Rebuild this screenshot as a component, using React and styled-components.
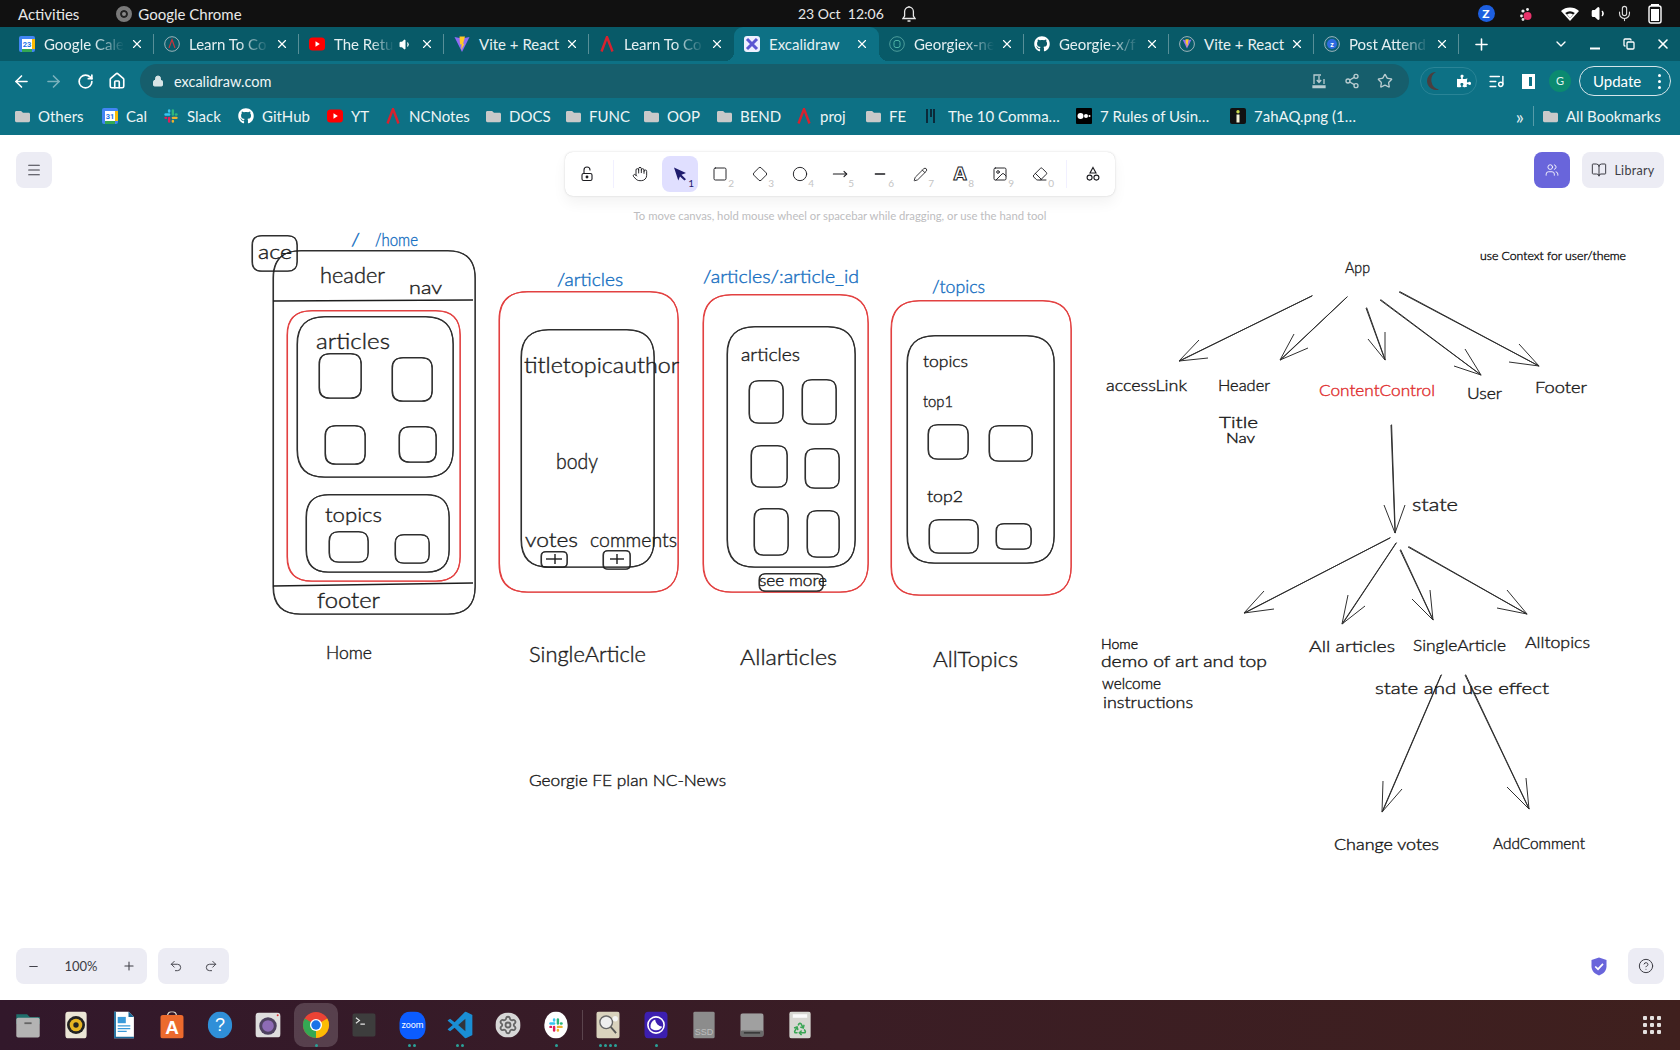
import React from 'react';
import styled, { createGlobalStyle, css } from 'styled-components';
import {
  ArrowLeft, ArrowRight, RotateCw, House, Lock, Share2, Star, Minus, Plus, Undo2, Redo2,
  Hand, Square, Diamond, Circle, Pencil, Image, Eraser, Users, BookOpen, CircleHelp,
  ChevronDown, X, Mic, Volume1, Settings, Recycle, Menu, MoveRight, ListMusic, Copy,
} from 'lucide-react';
import { FaGithub, FaFolder, FaPuzzlePiece } from 'react-icons/fa';

const GlobalStyle = createGlobalStyle`
  html, body { margin: 0; padding: 0; overflow: hidden; background: #fff; }
  body { font-family: "Lato", "Noto Sans", sans-serif; }
`;

const Page = styled.div`
  width: 1680px;
  height: 1050px;
  display: flex;
  flex-direction: column;
`;

/* ---------- gnome top bar ---------- */

const TopBar = styled.div`
  height: 27px;
  background: #111111;
  color: #e8e8e8;
  display: flex;
  align-items: center;
  font-size: 15px;
  padding-left: 18px;
`;

const TopLeft = styled.div`
  width: 780px;
  display: flex;
  align-items: center;
`;

const AppName = styled.div`
  margin-left: 37px;
  display: flex;
  align-items: center;
  gap: 6px;
`;

const ChromeDot = styled.span`
  width: 16px;
  height: 16px;
  border-radius: 50%;
  background: #8a8a8a;
  border: 4px solid #7a7a7a;
  box-sizing: border-box;
  box-shadow: inset 0 0 0 2px #222;
`;

const Clock = styled.div`
  display: flex;
  align-items: center;
  gap: 18px;
  white-space: nowrap;
  font-size: 14px;
`;

const Tray = styled.div`
  margin-left: auto;
  display: flex;
  align-items: center;
`;

const TraySlot = styled.span`
  width: ${(p) => p.$w}px;
  display: flex;
  justify-content: center;
  align-items: center;
`;

const ZoomBadge = styled.span`
  width: 17px;
  height: 17px;
  border-radius: 50%;
  background: #1d5fe0;
  color: #fff;
  font-size: 12px;
  font-weight: 900;
  line-height: 17px;
  text-align: center;
`;

/* ---------- chrome tabs ---------- */

const TabBar = styled.div`
  height: 34px;
  background: #085a68;
  display: flex;
  align-items: center;
  padding-left: 9px;
  color: #e6f0f2;
  font-size: 15px;
`;

const TAB_ACTIVE = '#0d7185';

const activeTab = css`
  background: ${TAB_ACTIVE};
  border-radius: 9px 9px 0 0;
  &::before, &::after {
    content: '';
    position: absolute;
    bottom: 0;
    width: 9px;
    height: 9px;
  }
  &::before {
    left: -9px;
    background: radial-gradient(circle at 0 0, transparent 9px, ${TAB_ACTIVE} 9px);
  }
  &::after {
    right: -9px;
    background: radial-gradient(circle at 100% 0, transparent 9px, ${TAB_ACTIVE} 9px);
  }
`;

const separator = css`
  &::after {
    content: '';
    position: absolute;
    right: 0;
    top: 7px;
    width: 1px;
    height: 20px;
    background: rgba(255, 255, 255, 0.32);
  }
`;

const Tab = styled.div`
  position: relative;
  width: 145px;
  height: 34px;
  box-sizing: border-box;
  padding-left: 10px;
  display: flex;
  align-items: center;
  flex-shrink: 0;
  ${(p) => p.$active && activeTab}
  ${(p) => p.$sep && separator}
`;

const Favicon = styled.span`
  width: 16px;
  height: 16px;
  display: flex;
  flex-shrink: 0;
`;

const TabTitle = styled.span`
  margin-left: 9px;
  width: ${(p) => p.$w || 80}px;
  white-space: nowrap;
  ${(p) => p.$fade && css`
    mask-image: linear-gradient(to right, #000 62%, transparent 100%);
  `}
`;

const TabClose = styled.span`
  display: flex;
  margin-left: auto;
  margin-right: 10px;
`;

const NewTab = styled.span`
  width: 44px;
  display: flex;
  justify-content: center;
`;

const WindowControls = styled.div`
  margin-left: auto;
  display: flex;
`;

const WindowButton = styled.span`
  width: 34px;
  display: flex;
  justify-content: center;
  align-items: center;
`;

/* ---------- chrome toolbar ---------- */

const Toolbar = styled.div`
  height: 40px;
  box-sizing: border-box;
  background: ${TAB_ACTIVE};
  display: flex;
  align-items: center;
  padding: 0 9px 0 5px;
  color: #fff;
`;

const NavButton = styled.span`
  width: 32px;
  display: flex;
  justify-content: center;
  opacity: ${(p) => (p.$dim ? 0.45 : 1)};
`;

const UrlBar = styled.div`
  flex: 1;
  height: 34px;
  margin: 0 11px 0 7px;
  border-radius: 17px;
  background: #165e6c;
  display: flex;
  align-items: center;
  padding: 0 8px 0 12px;
  font-size: 14.5px;
  color: #eef5f6;
`;

const UrlText = styled.span`
  margin-left: 10px;
`;

const UrlIcons = styled.div`
  margin-left: auto;
  display: flex;
  color: #b9ccd0;
`;

const UrlIcon = styled.span`
  width: 33px;
  display: flex;
  justify-content: center;
`;

const ExtensionPill = styled.div`
  width: 57px;
  height: 28px;
  box-sizing: border-box;
  border: 1px solid #2a8496;
  border-radius: 14px;
  display: flex;
  align-items: center;
  justify-content: space-between;
  padding: 0 5px 0 3px;
  margin-right: 3px;
`;

const Avatar = styled.span`
  width: 22px;
  height: 22px;
  border-radius: 50%;
  background: #0b8a70;
  font-size: 11px;
  line-height: 22px;
  text-align: center;
  color: #e4f4ef;
`;

const SidePanelIcon = styled.span`
  width: 13px;
  height: 15px;
  box-sizing: border-box;
  border: 3px solid #fff;
  border-left-width: 7px;
  background: ${TAB_ACTIVE};
`;

const UpdatePill = styled.div`
  width: 92px;
  height: 30px;
  box-sizing: border-box;
  margin-left: 3px;
  border: 1px solid #d5e6ea;
  border-radius: 15px;
  display: flex;
  align-items: center;
  justify-content: space-between;
  padding: 0 9px 0 13px;
  font-size: 15px;
`;

const Kebab = styled.span`
  display: flex;
  flex-direction: column;
  gap: 3px;
  span {
    width: 3px;
    height: 3px;
    border-radius: 50%;
    background: #fff;
  }
`;

/* ---------- bookmarks ---------- */

const BookmarkBar = styled.div`
  height: 34px;
  box-sizing: border-box;
  background: ${TAB_ACTIVE};
  display: flex;
  align-items: center;
  padding: 0 0 4px 15px;
  font-size: 15px;
  color: #eef5f6;
`;

const Bookmark = styled.div`
  width: ${(p) => p.$w}px;
  flex-shrink: 0;
  display: flex;
  align-items: center;
  gap: 8px;
  white-space: nowrap;
`;

const BookmarkEnd = styled.div`
  margin-left: auto;
  display: flex;
  align-items: center;
  padding-right: 15px;
`;

const Chevrons = styled.span`
  margin-right: 9px;
  font-size: 19px;
  line-height: 19px;
  color: #e6eff1;
`;

const BarRule = styled.span`
  width: 1px;
  height: 20px;
  background: rgba(255, 255, 255, 0.3);
  margin-right: 9px;
`;

/* ---------- excalidraw canvas ---------- */

const Canvas = styled.div`
  position: relative;
  flex: 1;
  background: #fff;
  overflow: hidden;
`;

const Drawing = styled.svg`
  position: absolute;
  inset: 0;
  width: 1680px;
  height: 865px;
`;

const Sketch = styled.text`
  font-family: "Lato", "Noto Sans", sans-serif;
  font-weight: 300;
  font-size: ${(p) => p.$size}px;
  fill: ${(p) => p.$color};
  stroke: ${(p) => p.$color};
  stroke-width: 0.4px;
`;

const UiLayer = styled.div`
  position: absolute;
  inset: 0;
  padding: 17px 16px 16px;
  display: flex;
  flex-direction: column;
  justify-content: space-between;
  color: #1b1b1f;
`;

const UiTop = styled.div`
  display: grid;
  grid-template-columns: 1fr auto 1fr;
  align-items: start;
`;

const UiBottom = styled.div`
  display: flex;
  align-items: center;
`;

const UiButton = styled.div`
  width: ${(p) => p.$w || 36}px;
  height: 36px;
  border-radius: 8px;
  background: ${(p) => (p.$primary ? '#6965db' : '#ececf4')};
  color: ${(p) => (p.$primary ? '#fff' : '#3d3d45')};
  display: flex;
  align-items: center;
  justify-content: center;
  gap: 7px;
  font-size: 12.5px;
  letter-spacing: 0.3px;
`;

const UiRight = styled.div`
  display: flex;
  justify-content: flex-end;
  gap: 12px;
`;

const Center = styled.div`
  display: flex;
  flex-direction: column;
  align-items: center;
`;

const ToolPanel = styled.div`
  display: flex;
  padding: 4px;
  background: #fff;
  border-radius: 8px;
  box-shadow: 0 0 1px rgba(0, 0, 0, 0.17), 0 0 3px rgba(0, 0, 0, 0.08), 0 7px 14px rgba(0, 0, 0, 0.05);
`;

const ToolGroup = styled.div`
  display: flex;
  gap: 4px;
`;

const ToolRule = styled.div`
  width: 1px;
  margin: 4px 8px;
  background: #f1f0ff;
`;

const Tool = styled.div`
  position: relative;
  width: 36px;
  height: 36px;
  border-radius: 8px;
  display: flex;
  align-items: center;
  justify-content: center;
  background: ${(p) => (p.$on ? '#e0dfff' : 'transparent')};
  color: #1b1b1f;
`;

const ToolDigit = styled.span`
  position: absolute;
  right: 4px;
  bottom: 3px;
  font-size: 10px;
  color: ${(p) => (p.$on ? '#1e1b6e' : '#c4c4c4')};
`;

const LetterIcon = styled.span`
  font-family: "DejaVu Sans", sans-serif;
  font-weight: 700;
  font-size: 17px;
  line-height: 1;
  color: #fff;
  -webkit-text-stroke: 1px #1b1b1f;
`;

const Hint = styled.div`
  margin-top: 12px;
  font-size: 11.3px;
  line-height: 16px;
  color: #bdbdc0;
  white-space: nowrap;
`;

const ControlGroup = styled.div`
  width: ${(p) => p.$w}px;
  height: 36px;
  margin-right: ${(p) => p.$mr || 0}px;
  border-radius: 8px;
  background: #ececf4;
  display: flex;
  align-items: center;
  justify-content: space-between;
  padding: 0 ${(p) => p.$pad}px;
  box-sizing: border-box;
  font-size: 13px;
  color: #3d3d45;
`;

const BottomRight = styled.div`
  margin-left: auto;
  display: flex;
  align-items: center;
  gap: 21px;
`;

/* ---------- dock ---------- */

const Dock = styled.div`
  height: 50px;
  background: linear-gradient(90deg, #32182b, #3a1d25 50%, #3f201e);
  display: flex;
  align-items: center;
  padding-left: 4px;
`;

const DockItem = styled.div`
  position: relative;
  width: 48px;
  height: 44px;
  flex-shrink: 0;
  display: flex;
  align-items: center;
  justify-content: center;
  border-radius: 10px;
  & > svg {
    transform: scale(0.9);
  }
  ${(p) => p.$on && css`
    width: 44px;
    margin: 0 2px;
    background: rgba(255, 255, 255, 0.17);
    & > svg {
      transform: none;
    }
  `}
`;

const DockDots = styled.span`
  position: absolute;
  bottom: 0;
  left: 0;
  right: 0;
  display: flex;
  justify-content: center;
  gap: 2px;
  span {
    width: 3px;
    height: 3px;
    border-radius: 50%;
    background: #2aa198;
  }
`;

const DockRule = styled.span`
  width: 1px;
  height: 30px;
  margin: 0 1px 0 2px;
  background: rgba(255, 255, 255, 0.18);
`;

const AppGrid = styled.div`
  margin-left: auto;
  margin-right: 19px;
  display: grid;
  grid-template-columns: repeat(3, 4px);
  gap: 3px;
  span {
    width: 4px;
    height: 4px;
    background: #e4e0df;
    border-radius: 1px;
  }
`;

/* ---------- favicons ---------- */

const NcMark = ({ size = 16 }) => (
  <svg width={size} height={size} viewBox="0 0 16 16">
    <path d="M2.5 15.5 L8 1 L13.5 15.5" fill="none" stroke="#d8222f" strokeWidth="2.4" />
  </svg>
);

const NcRing = () => (
  <svg width="16" height="16" viewBox="0 0 16 16">
    <circle cx="8" cy="8" r="7.3" fill="none" stroke="#9db4ba" />
    <path d="M5 12 L8 3.5 L11 12" fill="none" stroke="#c8353c" strokeWidth="1.2" />
  </svg>
);

const GCal = ({ day }) => (
  <svg width="16" height="16" viewBox="0 0 16 16">
    <rect width="16" height="16" rx="2" fill="#4285f4" />
    <rect x="3" y="3" width="10" height="10" fill="#fff" />
    <rect x="3" y="13" width="10" height="3" fill="#34a853" />
    <rect x="13" y="3" width="3" height="10" fill="#fbbc04" />
    <text x="8" y="11" textAnchor="middle" fontSize="7.5" fontWeight="700" fontFamily="Roboto" fill="#1a73e8">{day}</text>
  </svg>
);

const YouTube = () => (
  <svg width="16" height="16" viewBox="0 0 16 16">
    <rect y="1.5" width="16" height="13" rx="3.5" fill="#f00" />
    <path d="M6.5 5.3 L10.8 8 L6.5 10.7 Z" fill="#fff" />
  </svg>
);

const Vite = ({ ring }) => (
  <svg width="16" height="16" viewBox="0 0 16 16">
    {ring && <circle cx="8" cy="8" r="7.4" fill="none" stroke="#9db4ba" />}
    <g transform={ring ? 'translate(3.2 3) scale(0.6)' : undefined}>
      <path d="M0.5 1 L8 2.5 L15.5 1 L8 16 Z" fill="#8f6bf7" />
      <path d="M5.5 0.5 L11 0.5 L9 8 L10.5 7.5 L7.3 14 L7.5 8 L6 8.5 Z" fill="#ffca28" />
    </g>
  </svg>
);

const ExcalidrawMark = () => (
  <svg width="16" height="16" viewBox="0 0 16 16">
    <rect width="16" height="16" rx="3" fill="#eef0ff" />
    <path d="M3 3 L13 13 M13 3 L3 13" stroke="#5b57d1" strokeWidth="3" />
  </svg>
);

const ZoomRound = () => (
  <svg width="16" height="16" viewBox="0 0 16 16">
    <circle cx="8" cy="8" r="7.4" fill="#0d5f76" stroke="#9db4ba" />
    <circle cx="8" cy="8" r="5" fill="#2d6be0" />
    <text x="8" y="10.5" textAnchor="middle" fontSize="7" fontWeight="700" fontFamily="Roboto" fill="#fff">z</text>
  </svg>
);

const CodeRing = () => (
  <svg width="16" height="16" viewBox="0 0 16 16">
    <circle cx="8" cy="8" r="7.3" fill="none" stroke="#4d9d9b" />
    <rect x="5" y="4.5" width="6" height="7" rx="2" fill="none" stroke="#4db3a5" />
  </svg>
);

const Slack = ({ size = 16 }) => (
  <svg width={size} height={size} viewBox="0 0 24 24">
    <rect x="2" y="8" width="9" height="3.6" rx="1.8" fill="#36c5f0" />
    <rect x="7.4" y="2" width="3.6" height="5" rx="1.8" fill="#36c5f0" />
    <rect x="13" y="2" width="3.6" height="9.6" rx="1.8" fill="#2eb67d" />
    <rect x="17.6" y="8" width="4.4" height="3.6" rx="1.8" fill="#2eb67d" />
    <rect x="13" y="13" width="9" height="3.6" rx="1.8" fill="#ecb22e" />
    <rect x="13" y="17.6" width="3.6" height="4.4" rx="1.8" fill="#ecb22e" />
    <rect x="7.4" y="13" width="3.6" height="9" rx="1.8" fill="#e01e5a" />
    <rect x="2" y="13" width="4.4" height="3.6" rx="1.8" fill="#e01e5a" />
  </svg>
);

const Bars = () => (
  <svg width="16" height="16" viewBox="0 0 16 16">
    <path d="M3 1v14M7 1v8M10 1v14" stroke="#0b2a3a" strokeWidth="2" />
  </svg>
);

const BlackDots = () => (
  <svg width="16" height="16" viewBox="0 0 16 16">
    <rect width="16" height="16" rx="1" fill="#000" />
    <circle cx="4.5" cy="8" r="3" fill="#fff" />
    <circle cx="10" cy="8" r="2" fill="#fff" />
    <circle cx="13.5" cy="8" r="1" fill="#fff" />
  </svg>
);

const InfoTile = () => (
  <svg width="16" height="16" viewBox="0 0 16 16">
    <rect width="16" height="16" rx="2" fill="#111" />
    <rect x="6.5" y="6.5" width="3" height="8" fill="#f4f2d8" />
    <circle cx="8" cy="3.8" r="1.7" fill="#c8d84a" />
  </svg>
);

const Folder = () => <FaFolder size={15} color="#c9c9c9" />;

/* ---------- hand drawn diagram ---------- */

const INK = '#1e1e1e';
const RED = '#e03131';
const BLUE = '#1971c2';

const roundedPath = (x, y, w, h, r) =>
  `M${x + r} ${y}L${x + w - r} ${y}Q${x + w} ${y} ${x + w} ${y + r}L${x + w} ${y + h - r}Q${x + w} ${y + h} ${x + w - r} ${y + h}L${x + r} ${y + h}Q${x} ${y + h} ${x} ${y + h - r}L${x} ${y + r}Q${x} ${y} ${x + r} ${y}Z`;

const RoughBox = ({ x, y, x2, y2, r = 10, c = INK }) => {
  const w = x2 - x;
  const h = y2 - y;
  return (
    <g fill="none" stroke={c} strokeWidth="1.1" opacity="0.92">
      <path d={roundedPath(x, y, w, h, r)} />
      <path d={roundedPath(x + 0.5, y - 0.5, w - 0.2, h + 0.8, r + 0.8)} />
    </g>
  );
};

const Arrow = ({ a, b, h1, h2 }) => (
  <g fill="none" stroke={INK} strokeWidth="1" opacity="0.92">
    <path d={`M${a[0]} ${a[1]}L${b[0]} ${b[1]}`} />
    <path d={`M${a[0] + 0.6} ${a[1] - 0.5}L${b[0] + 0.3} ${b[1] + 0.2}`} />
    <path d={`M${h1[0]} ${h1[1]}L${b[0]} ${b[1]}`} />
    <path d={`M${h2[0]} ${h2[1]}L${b[0]} ${b[1]}`} />
  </g>
);

const boxes = [
  [252, 236, 297, 271, 9],
  [273, 251, 475, 614, 27],
  [297, 317, 453, 477, 27],
  [319, 354, 361, 398, 10],
  [392, 358, 432, 401, 10],
  [325, 426, 365, 464, 10],
  [399, 427, 436, 462, 10],
  [306, 495, 449, 572, 22],
  [329, 532, 368, 562, 9],
  [395, 535, 429, 563, 8],
  [521, 330, 654, 567, 27],
  [541, 552, 567, 567, 4],
  [603, 551, 630, 569, 4],
  [727, 327, 855, 567, 27],
  [749, 381, 783, 423, 9],
  [802, 380, 836, 424, 9],
  [751, 446, 787, 487, 9],
  [805, 449, 839, 488, 9],
  [754, 509, 788, 555, 9],
  [807, 511, 839, 557, 9],
  [759, 574, 823, 591, 6],
  [907, 336, 1054, 563, 27],
  [928, 425, 968, 459, 9],
  [989, 426, 1032, 461, 9],
  [929, 520, 978, 553, 9],
  [996, 524, 1031, 549, 7],
];

const redBoxes = [
  [287, 311, 460, 581, 24],
  [499, 292, 678, 592, 28],
  [703, 295, 868, 592, 28],
  [891, 301, 1071, 595, 28],
];

const strokes = [
  'M273 301L473 300',
  'M273 586L473 583',
  'M546 559L562 559',
  'M555 554L555 564',
  'M610 559L624 559',
  'M617 554L617 564',
];

const arrows = [
  { a: [1312, 296], b: [1179, 361], h1: [1199, 340], h2: [1208, 358] },
  { a: [1347, 297], b: [1280, 360], h1: [1294, 334], h2: [1308, 348] },
  { a: [1366, 308], b: [1385, 360], h1: [1368, 339], h2: [1385, 332] },
  { a: [1380, 300], b: [1481, 375], h1: [1465, 349], h2: [1454, 366] },
  { a: [1399, 292], b: [1539, 366], h1: [1519, 344], h2: [1509, 362] },
  { a: [1391, 425], b: [1395, 533], h1: [1384, 505], h2: [1405, 505] },
  { a: [1390, 538], b: [1244, 613], h1: [1264, 591], h2: [1274, 609] },
  { a: [1396, 543], b: [1342, 624], h1: [1348, 595], h2: [1365, 606] },
  { a: [1400, 550], b: [1433, 620], h1: [1412, 599], h2: [1430, 590] },
  { a: [1408, 547], b: [1527, 614], h1: [1507, 590], h2: [1497, 608] },
  { a: [1441, 675], b: [1382, 812], h1: [1383, 781], h2: [1402, 789] },
  { a: [1465, 675], b: [1529, 809], h1: [1507, 787], h2: [1526, 778] },
];

// label, left, right, baseline, font size, colour
const labels = [
  ['ace', 258, 292, 259, 20, INK],
  ['/', 351, 360, 246, 17, BLUE],
  ['/home', 375, 418, 246, 17, BLUE],
  ['header', 320, 385, 283, 21, INK],
  ['nav', 409, 442, 294, 18, INK],
  ['articles', 316, 390, 349, 21, INK],
  ['topics', 325, 382, 522, 20, INK],
  ['footer', 317, 380, 608, 21, INK],
  ['/articles', 557, 623, 286, 18, BLUE],
  ['titletopicauthor', 524, 679, 373, 21, INK],
  ['body', 556, 598, 469, 21, INK],
  ['votes', 525, 578, 547, 20, INK],
  ['comments', 590, 677, 547, 20, INK],
  ['/articles/:article_id', 703, 859, 283, 18, BLUE],
  ['/topics', 932, 985, 293, 18, BLUE],
  ['articles', 741, 800, 361, 17, INK],
  ['see more', 759, 827, 586, 16, INK],
  ['topics', 923, 968, 367, 16, INK],
  ['top1', 923, 953, 407, 16, INK],
  ['top2', 927, 963, 502, 16, INK],
  ['Home', 326, 372, 659, 17, INK],
  ['SingleArticle', 529, 646, 662, 21, INK],
  ['Allarticles', 740, 837, 665, 22, INK],
  ['AllTopics', 933, 1018, 667, 22, INK],
  ['Georgie FE plan NC-News', 529, 726, 786, 16, INK],
  ['use Context for user/theme', 1480, 1626, 260, 11, INK],
  ['App', 1345, 1370, 273, 16, INK],
  ['accessLink', 1106, 1187, 391, 16, INK],
  ['Header', 1218, 1270, 391, 16, INK],
  ['ContentControl', 1319, 1435, 396, 16, RED],
  ['User', 1467, 1502, 399, 16, INK],
  ['Footer', 1535, 1587, 393, 16, INK],
  ['Title', 1219, 1258, 428, 15, INK],
  ['Nav', 1226, 1255, 443, 13, INK],
  ['state', 1412, 1458, 511, 17, INK],
  ['Home', 1101, 1138, 649, 13, INK],
  ['demo of art and top', 1101, 1267, 667, 15, INK],
  ['welcome', 1102, 1161, 689, 15, INK],
  ['instructions', 1103, 1193, 708, 15, INK],
  ['All articles', 1309, 1395, 652, 16, INK],
  ['SingleArticle', 1413, 1506, 651, 16, INK],
  ['Alltopics', 1525, 1590, 648, 16, INK],
  ['state and use effect', 1375, 1549, 694, 16, INK],
  ['Change votes', 1334, 1439, 850, 15, INK],
  ['AddComment', 1493, 1585, 849, 15, INK],
];

const Diagram = () => (
  <Drawing viewBox="0 135 1680 865">
    {redBoxes.map(([x, y, x2, y2, r]) => <RoughBox key={`${x}-${y}`} x={x} y={y} x2={x2} y2={y2} r={r} c={RED} />)}
    {boxes.map(([x, y, x2, y2, r]) => <RoughBox key={`${x}-${y}`} x={x} y={y} x2={x2} y2={y2} r={r} />)}
    {strokes.map((d) => <path key={d} d={d} fill="none" stroke={INK} strokeWidth="1.4" />)}
    {arrows.map((arrow) => <Arrow key={`${arrow.a}`} {...arrow} />)}
    {labels.map(([text, x, x2, y, size, color]) => (
      <Sketch
        key={`${text}-${x}`}
        x={x}
        y={y}
        textLength={x2 - x}
        lengthAdjust="spacingAndGlyphs"
        $size={size}
        $color={color}
      >
        {text}
      </Sketch>
    ))}
  </Drawing>
);

/* ---------- toolbar icons ---------- */

const PointerIcon = () => (
  <svg width="16" height="16" viewBox="0 0 16 16">
    <path d="M2 1.5 L14 7 L9.5 8.8 L14 13.2 L12.4 14.6 L8 10.4 L6.3 14.5 Z" fill="#1e1b6e" />
  </svg>
);

const OpenLockIcon = () => (
  <svg width="16" height="16" viewBox="0 0 16 16" fill="none" stroke="#1b1b1f" strokeWidth="1.1">
    <rect x="3" y="7.5" width="10" height="7" rx="1.6" />
    <path d="M5 7.5V4a3 3 0 0 1 6 0v.6" />
    <circle cx="8" cy="11" r="0.9" fill="#1b1b1f" />
  </svg>
);

const ShapesIcon = () => (
  <svg width="16" height="16" viewBox="0 0 16 16" fill="none" stroke="#1b1b1f" strokeWidth="1.1">
    <path d="M8 1.5L11 7H5z" />
    <circle cx="4.6" cy="11.6" r="2.5" />
    <circle cx="11.4" cy="11.6" r="2.5" />
  </svg>
);

const ShieldIcon = () => (
  <svg width="16" height="19" viewBox="0 0 16 19">
    <path d="M8 0.5 L15.5 3 V9.5 C15.5 14 12 17 8 18.5 C4 17 0.5 14 0.5 9.5 V3 Z" fill="#6965db" />
    <path d="M4.2 9.5 L7 12.2 L12 6.8" fill="none" stroke="#fff" strokeWidth="1.7" />
  </svg>
);

const tools = [
  { key: 'hand', icon: <Hand size={16} strokeWidth={1.4} /> },
  { key: 'pointer', icon: <PointerIcon />, digit: 1, on: true },
  { key: 'rect', icon: <Square size={16} strokeWidth={1.4} />, digit: 2 },
  { key: 'diamond', icon: <Diamond size={16} strokeWidth={1.4} />, digit: 3 },
  { key: 'circle', icon: <Circle size={16} strokeWidth={1.4} />, digit: 4 },
  { key: 'arrow', icon: <MoveRight size={16} strokeWidth={1.6} />, digit: 5 },
  { key: 'line', icon: <Minus size={16} strokeWidth={2} />, digit: 6 },
  { key: 'pencil', icon: <Pencil size={15} strokeWidth={1.4} />, digit: 7 },
  { key: 'text', icon: <LetterIcon>A</LetterIcon>, digit: 8 },
  { key: 'image', icon: <Image size={16} strokeWidth={1.4} />, digit: 9 },
  { key: 'eraser', icon: <Eraser size={16} strokeWidth={1.4} />, digit: 0 },
];

/* ---------- dock icons ---------- */

const ChromeLogo = () => (
  <svg width="28" height="28" viewBox="0 0 30 30">
    <circle cx="15" cy="15" r="14" fill="#ea4335" />
    <path d="M15 15 L27.1 8 A14 14 0 0 1 15 29 Z" fill="#fbbc04" />
    <path d="M15 15 L15 29 A14 14 0 0 1 2.9 8 Z" fill="#34a853" />
    <circle cx="15" cy="15" r="6.5" fill="#fff" />
    <circle cx="15" cy="15" r="5" fill="#1a73e8" />
  </svg>
);

const dockApps = [
  {
    key: 'files',
    icon: (
      <svg width="28" height="30" viewBox="0 0 28 30">
        <path d="M1 3h12l3 3h11v8H1z" fill="#1f6f6c" />
        <rect x="1" y="7" width="26" height="22" rx="2" fill="#b3b3b3" />
        <rect x="10" y="12" width="8" height="2" fill="#666" />
      </svg>
    ),
  },
  {
    key: 'rhythmbox',
    icon: (
      <svg width="24" height="30" viewBox="0 0 24 30">
        <rect width="24" height="30" rx="4" fill="#ece6d6" />
        <circle cx="12" cy="15" r="10" fill="#222" />
        <circle cx="12" cy="15" r="7" fill="#e6b422" />
        <circle cx="12" cy="15" r="3" fill="#222" />
      </svg>
    ),
  },
  {
    key: 'writer',
    icon: (
      <svg width="24" height="30" viewBox="0 0 24 30">
        <path d="M1 0h16l6 6v24H1z" fill="#fff" />
        <path d="M17 0l6 6h-6z" fill="#18699a" />
        <path d="M1 0v30h22v-2H3V0z" fill="#18699a" />
        <rect x="5" y="6" width="9" height="7" fill="#3a9ad9" />
        <path d="M5 16h14M5 19h14M5 22h10" stroke="#3a9ad9" strokeWidth="1.4" />
      </svg>
    ),
  },
  {
    key: 'software',
    icon: (
      <svg width="26" height="30" viewBox="0 0 26 30">
        <path d="M8 5a5 5 0 0 1 10 0" fill="none" stroke="#d9d3c8" strokeWidth="1.5" />
        <rect y="4" width="26" height="26" rx="3" fill="#ec6a2d" />
        <text x="13" y="25" textAnchor="middle" fontSize="21" fontFamily="Liberation Sans" fontWeight="700" fill="#fff">A</text>
      </svg>
    ),
  },
  {
    key: 'help',
    icon: (
      <svg width="28" height="30" viewBox="0 0 28 30">
        <ellipse cx="14" cy="15" rx="13.5" ry="15" fill="#2f8fd8" />
        <text x="14" y="22" textAnchor="middle" fontSize="20" fontFamily="Liberation Sans" fill="#fff">?</text>
      </svg>
    ),
  },
  {
    key: 'cheese',
    icon: (
      <svg width="28" height="28" viewBox="0 0 26 26">
        <rect width="26" height="26" rx="4" fill="#dedede" />
        <circle cx="13" cy="14" r="9" fill="#4e4260" />
        <circle cx="13" cy="14" r="6" fill="#8d6bb5" />
        <circle cx="23" cy="3" r="1" fill="#d33" />
      </svg>
    ),
  },
  { key: 'chrome', icon: <ChromeLogo />, dots: 1, on: true },
  {
    key: 'terminal',
    icon: (
      <svg width="26" height="26" viewBox="0 0 26 26">
        <rect width="26" height="26" rx="3" fill="#3d3d3d" />
        <path d="M4 5l4 3-4 3M9 12h5" fill="none" stroke="#e6e6e6" strokeWidth="1.2" />
      </svg>
    ),
  },
  {
    key: 'zoom',
    icon: (
      <svg width="31" height="31" viewBox="0 0 28 30">
        <rect width="28" height="30" rx="12" fill="#0b5cff" />
        <text x="14" y="18" textAnchor="middle" fontSize="9.5" fontFamily="Roboto" fill="#fff">zoom</text>
      </svg>
    ),
    dots: 2,
  },
  {
    key: 'vscode',
    icon: (
      <svg width="28" height="30" viewBox="0 0 28 30">
        <path d="M20 0l8 4v22l-8 4L8 18l-5 4-3-2 6-5-6-5 3-2 5 4z" fill="#1a8ed4" />
        <path d="M20 8v14l-8-7z" fill="#32343a" />
      </svg>
    ),
    dots: 2,
  },
  {
    key: 'settings',
    icon: (
      <svg width="28" height="28" viewBox="0 0 28 28">
        <circle cx="14" cy="14" r="14" fill="#d7d7d7" />
        <foreignObject x="3" y="3" width="22" height="22">
          <Settings size={22} color="#666" strokeWidth={2.2} />
        </foreignObject>
      </svg>
    ),
  },
  {
    key: 'slack',
    icon: (
      <svg width="28" height="30" viewBox="0 0 28 30">
        <ellipse cx="14" cy="15" rx="13" ry="15" fill="#fff" />
        <g transform="translate(5 6)"><Slack size={18} /></g>
      </svg>
    ),
    dots: 1,
  },
  { rule: true, key: 'rule' },
  {
    key: 'magnifier',
    icon: (
      <svg width="26" height="30" viewBox="0 0 26 30">
        <rect width="26" height="30" rx="3" fill="#d9d2bd" />
        <circle cx="11" cy="12" r="7" fill="#eee" stroke="#666" strokeWidth="1.5" />
        <path d="M16 17l6 7" stroke="#555" strokeWidth="2" />
        <circle cx="21" cy="8" r="3" fill="#f5f5f5" />
      </svg>
    ),
    dots: 4,
  },
  {
    key: 'purple',
    icon: (
      <svg width="26" height="30" viewBox="0 0 26 30">
        <rect width="26" height="30" rx="5" fill="#3c1fb0" />
        <circle cx="13" cy="15" r="9" fill="none" stroke="#fff" strokeWidth="1.8" />
        <path d="M7 18a8 8 0 0 0 13-1a9 9 0 0 1-8-8a8 8 0 0 0-5 9z" fill="#fff" />
      </svg>
    ),
    dots: 1,
  },
  {
    key: 'ssd',
    icon: (
      <svg width="24" height="30" viewBox="0 0 24 30">
        <rect width="24" height="30" rx="2" fill="#8c8c8c" />
        <text x="12" y="26" textAnchor="middle" fontSize="10" fontFamily="Liberation Sans" fill="#bdbdbd">SSD</text>
      </svg>
    ),
  },
  {
    key: 'drive',
    icon: (
      <svg width="26" height="26" viewBox="0 0 26 26">
        <rect width="26" height="26" rx="3" fill="#a0a0a0" />
        <rect y="19" width="26" height="7" rx="2" fill="#6b6b6b" />
        <rect x="4" y="21" width="18" height="1.5" fill="#2f2f2f" />
      </svg>
    ),
  },
  {
    key: 'trash',
    icon: (
      <svg width="24" height="30" viewBox="0 0 24 30">
        <rect width="24" height="30" rx="3" fill="#d7d7d2" />
        <rect x="4" y="3" width="16" height="4" fill="#fbfbfb" />
        <foreignObject x="4" y="11" width="16" height="16">
          <Recycle size={16} color="#3aa655" strokeWidth={2.6} />
        </foreignObject>
      </svg>
    ),
  },
];

/* ---------- data ---------- */

const browserTabs = [
  { id: 'cal', title: 'Google Cale', icon: <GCal day="23" />, sep: true, fade: true },
  { id: 'ncring', title: 'Learn To Co', icon: <NcRing />, sep: true, fade: true },
  { id: 'yt', title: 'The Retu', icon: <YouTube />, sep: true, fade: true, width: 60, audio: true },
  { id: 'vite', title: 'Vite + React', icon: <Vite />, sep: true },
  { id: 'nc', title: 'Learn To Co', icon: <NcMark />, fade: true },
  { id: 'excalidraw', title: 'Excalidraw', icon: <ExcalidrawMark />, active: true },
  { id: 'repo', title: 'Georgiex-ne', icon: <CodeRing />, sep: true, fade: true },
  { id: 'gh', title: 'Georgie-x/f', icon: <FaGithub size={16} color="#fff" />, sep: true, fade: true },
  { id: 'vite2', title: 'Vite + React', icon: <Vite ring />, sep: true },
  { id: 'zoom', title: 'Post Attend', icon: <ZoomRound />, sep: true, fade: true },
];

const bookmarks = [
  { title: 'Others', w: 87, icon: <Folder /> },
  { title: 'Cal', w: 61, icon: <GCal day="31" /> },
  { title: 'Slack', w: 75, icon: <Slack /> },
  { title: 'GitHub', w: 89, icon: <FaGithub size={16} color="#fff" /> },
  { title: 'YT', w: 58, icon: <YouTube /> },
  { title: 'NCNotes', w: 101, icon: <NcMark /> },
  { title: 'DOCS', w: 80, icon: <Folder /> },
  { title: 'FUNC', w: 78, icon: <Folder /> },
  { title: 'OOP', w: 73, icon: <Folder /> },
  { title: 'BEND', w: 79, icon: <Folder /> },
  { title: 'proj', w: 70, icon: <NcMark /> },
  { title: 'FE', w: 58, icon: <Folder /> },
  { title: 'The 10 Comma…', w: 152, icon: <Bars /> },
  { title: '7 Rules of Usin…', w: 154, icon: <BlackDots /> },
  { title: '7ahAQ.png (1…', w: 150, icon: <InfoTile /> },
];

const App = () => (
  <Page>
    <GlobalStyle />

    <TopBar>
      <TopLeft>
        <span>Activities</span>
        <AppName>
          <ChromeDot />
          Google Chrome
        </AppName>
      </TopLeft>
      <Clock>
        <span>23 Oct&nbsp; 12:06</span>
        <svg width="14" height="18" viewBox="0 0 14 18" fill="none" stroke="#e8e8e8" strokeWidth="1.3">
          <path d="M1 13.5h12l-1.6-2.5V6.5a4.4 4.4 0 0 0-8.8 0V11z" />
          <path d="M7 1v1M5.5 16h3" />
        </svg>
      </Clock>
      <Tray>
        <TraySlot $w={24}><ZoomBadge>Z</ZoomBadge></TraySlot>
        <TraySlot $w={56}>
          <svg width="16" height="16" viewBox="0 0 16 16">
            <circle cx="9.5" cy="10" r="4" fill="#e8336b" />
            <circle cx="5" cy="5" r="1.6" fill="#eee" />
            <circle cx="9.5" cy="3.5" r="1.4" fill="#eee" />
            <circle cx="3.5" cy="10" r="1.4" fill="#eee" />
            <circle cx="5" cy="13.5" r="1.4" fill="#ddd" />
          </svg>
        </TraySlot>
        <TraySlot $w={32}>
          <svg width="18" height="14" viewBox="0 0 18 14">
            <path d="M0 4a13.5 13.5 0 0 1 18 0L9 14z" fill="#fff" />
            <path d="M4.2 6a8 8 0 0 1 9.6 0L9 11z" fill="#111" />
            <path d="M6 7.5a5 5 0 0 1 6 0L9 11z" fill="#fff" />
          </svg>
        </TraySlot>
        <TraySlot $w={26}><Volume1 size={17} color="#fff" fill="#fff" /></TraySlot>
        <TraySlot $w={24}><Mic size={17} color="#ddd" strokeWidth={1.6} /></TraySlot>
        <TraySlot $w={38}>
          <svg width="14" height="20" viewBox="0 0 14 20">
            <rect x="3" y="0" width="8" height="2" fill="#fff" />
            <rect x="1" y="2" width="12" height="17" rx="2" fill="none" stroke="#fff" strokeWidth="1.4" />
            <rect x="3" y="5" width="8" height="12" fill="#fff" />
          </svg>
        </TraySlot>
        <TraySlot $w={6} />
      </Tray>
    </TopBar>

    <TabBar>
      {browserTabs.map((tab) => (
        <Tab key={tab.id} $active={tab.active} $sep={tab.sep}>
          <Favicon>{tab.icon}</Favicon>
          <TabTitle $fade={tab.fade} $w={tab.width}>{tab.title}</TabTitle>
          {tab.audio && <Volume1 size={13} color="#fff" fill="#fff" style={{ marginLeft: 5 }} />}
          <TabClose><X size={14} color="#fff" strokeWidth={2} /></TabClose>
        </Tab>
      ))}
      <NewTab><Plus size={19} color="#fff" strokeWidth={2} /></NewTab>
      <WindowControls>
        <WindowButton><ChevronDown size={16} color="#fff" /></WindowButton>
        <WindowButton>
          <svg width="12" height="12" viewBox="0 0 12 12"><path d="M1 10.5h10" stroke="#fff" strokeWidth="2" /></svg>
        </WindowButton>
        <WindowButton><Copy size={12} color="#fff" strokeWidth={2.6} /></WindowButton>
        <WindowButton><X size={16} color="#fff" strokeWidth={2.4} /></WindowButton>
      </WindowControls>
    </TabBar>

    <Toolbar>
      <NavButton><ArrowLeft size={19} /></NavButton>
      <NavButton $dim><ArrowRight size={19} /></NavButton>
      <NavButton><RotateCw size={17} strokeWidth={2.4} /></NavButton>
      <NavButton><House size={18} strokeWidth={2.2} /></NavButton>
      <UrlBar>
        <Lock size={12} color="#d8e4e6" fill="#d8e4e6" />
        <UrlText>excalidraw.com</UrlText>
        <UrlIcons>
          <UrlIcon>
            <svg width="16" height="16" viewBox="0 0 16 16" fill="none" stroke="#b9ccd0" strokeWidth="1.3">
              <path d="M3 11V2h7M13 6v5M8 3v6M5.8 7L8 9.5 10.2 7M2 13h12v1.5H2z" />
            </svg>
          </UrlIcon>
          <UrlIcon><Share2 size={16} /></UrlIcon>
          <UrlIcon><Star size={16} /></UrlIcon>
        </UrlIcons>
      </UrlBar>
      <ExtensionPill>
        <svg width="18" height="20" viewBox="0 0 18 20">
          <path d="M12 1A9 9 0 1 0 15 18.5A9.5 9.5 0 0 1 12 1z" fill="#4b3f3f" />
        </svg>
        <FaPuzzlePiece size={14} color="#fff" />
      </ExtensionPill>
      <NavButton><ListMusic size={17} strokeWidth={2} /></NavButton>
      <NavButton><SidePanelIcon /></NavButton>
      <NavButton><Avatar>G</Avatar></NavButton>
      <UpdatePill>
        Update
        <Kebab><span /><span /><span /></Kebab>
      </UpdatePill>
    </Toolbar>

    <BookmarkBar>
      {bookmarks.map((b) => (
        <Bookmark key={b.title} $w={b.w}>
          {b.icon}
          <span>{b.title}</span>
        </Bookmark>
      ))}
      <BookmarkEnd>
        <Chevrons>»</Chevrons>
        <BarRule />
        <Bookmark $w={122}>
          <Folder />
          <span>All Bookmarks</span>
        </Bookmark>
      </BookmarkEnd>
    </BookmarkBar>

    <Canvas>
      <Diagram />
      <UiLayer>
        <UiTop>
          <UiButton><Menu size={16} strokeWidth={1.6} /></UiButton>
          <Center>
            <ToolPanel>
              <Tool><OpenLockIcon /></Tool>
              <ToolRule />
              <ToolGroup>
                {tools.map((t) => (
                  <Tool key={t.key} $on={t.on}>
                    {t.icon}
                    {t.digit !== undefined && <ToolDigit $on={t.on}>{t.digit}</ToolDigit>}
                  </Tool>
                ))}
              </ToolGroup>
              <ToolRule />
              <Tool><ShapesIcon /></Tool>
            </ToolPanel>
            <Hint>To move canvas, hold mouse wheel or spacebar while dragging, or use the hand tool</Hint>
          </Center>
          <UiRight>
            <UiButton $primary><Users size={14} strokeWidth={1.5} /></UiButton>
            <UiButton $w={82}>
              <BookOpen size={16} strokeWidth={1.5} />
              Library
            </UiButton>
          </UiRight>
        </UiTop>
        <UiBottom>
          <ControlGroup $w={131} $pad={11} $mr={11}>
            <Minus size={13} strokeWidth={1.8} />
            100%
            <Plus size={14} strokeWidth={1.8} />
          </ControlGroup>
          <ControlGroup $w={71} $pad={11}>
            <Undo2 size={14} strokeWidth={1.6} />
            <Redo2 size={14} strokeWidth={1.6} />
          </ControlGroup>
          <BottomRight>
            <ShieldIcon />
            <UiButton><CircleHelp size={16} strokeWidth={1.5} /></UiButton>
          </BottomRight>
        </UiBottom>
      </UiLayer>
    </Canvas>

    <Dock>
      {dockApps.map((app) =>
        app.rule ? (
          <DockRule key={app.key} />
        ) : (
          <DockItem key={app.key} $on={app.on}>
            {app.icon}
            {app.dots && (
              <DockDots>
                {Array.from({ length: app.dots }).map((_, i) => <span key={i} />)}
              </DockDots>
            )}
          </DockItem>
        ),
      )}
      <AppGrid>
        {Array.from({ length: 9 }).map((_, i) => <span key={i} />)}
      </AppGrid>
    </Dock>
  </Page>
);

export default App;
